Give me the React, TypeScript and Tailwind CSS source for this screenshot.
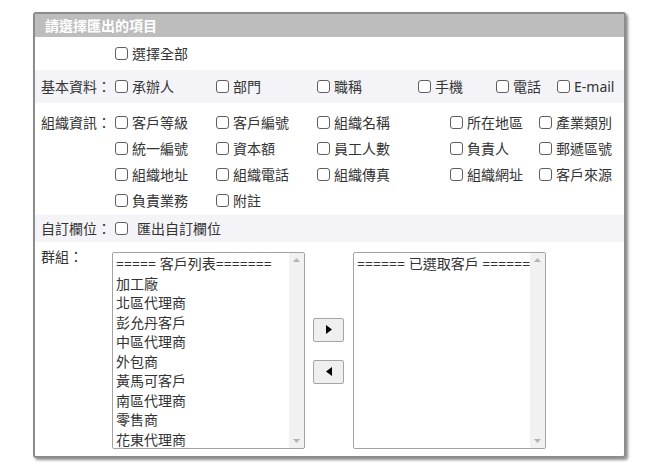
import React from "react";

const Box = () => (
  <span className="inline-block w-[13px] h-[13px] border border-[#5f5f5f] rounded-[3px] bg-white shrink-0" />
);

const Item = ({ label, w, gap = "gap-[4px]" }: { label: string; w?: string; gap?: string }) => (
  <div className={`flex items-center ${gap} ${w ?? ""} shrink-0`}>
    <Box />
    <span className="whitespace-nowrap">{label}</span>
  </div>
);

const ScrollSelect = ({ lines }: { lines: string[] }) => (
  <div className="flex w-[193px] h-[197px] border border-[#a3a3a3] rounded-[2px] bg-white overflow-hidden">
    <div className="flex-1 min-w-0 overflow-hidden pl-[3px] pt-[1px] leading-[19.5px] text-[14px] text-[#333]">
      {lines.map((l, i) => (
        <div key={i} className="whitespace-nowrap overflow-hidden">
          {l}
        </div>
      ))}
    </div>
    <div className="w-[15px] bg-[#f1f1f1] flex flex-col justify-between items-center py-[5px]">
      <svg width="7" height="4" viewBox="0 0 7 4">
        <path d="M0 4 L3.5 0 L7 4 Z" fill="#b4b4b4" />
      </svg>
      <svg width="7" height="4" viewBox="0 0 7 4">
        <path d="M0 0 L3.5 4 L7 0 Z" fill="#b4b4b4" />
      </svg>
    </div>
  </div>
);

export default function App() {
  const left = [
    "===== 客戶列表=======",
    "加工廠",
    "北區代理商",
    "彭允丹客戶",
    "中區代理商",
    "外包商",
    "黃馬可客戶",
    "南區代理商",
    "零售商",
    "花東代理商",
  ];
  return (
    <div className="w-[661px] h-[472px] bg-white font-['Noto_Sans','Noto_Sans_CJK_TC',sans-serif] text-[14px] text-[#333] pt-[12px] pl-[33px]">
      <div className="w-[593px] h-[446px] border-2 border-[#8c8c8c] rounded-[3px] shadow-[2px_2px_3px_rgba(0,0,0,0.45)] flex flex-col overflow-hidden">
        <div className="h-[23px] bg-[#bdbdbd] text-white font-bold text-[14px] leading-[23px] pl-[10px]">
          請選擇匯出的項目
        </div>
        {/* select all */}
        <div className="h-[33px] flex items-center">
          <div className="w-[80px] shrink-0" />
          <Item label="選擇全部" />
        </div>
        {/* basic */}
        <div className="h-[33px] flex items-center bg-[#f4f4f8]">
          <div className="w-[80px] shrink-0 pl-[6px] whitespace-nowrap">基本資料：</div>
          <Item label="承辦人" w="w-[101px]" />
          <Item label="部門" w="w-[101px]" />
          <Item label="職稱" w="w-[101px]" />
          <Item label="手機" w="w-[78px]" />
          <Item label="電話" w="w-[61px]" />
          <Item label="E-mail" />
        </div>
        {/* org */}
        <div className="h-[112px] flex bg-white pt-[6px]">
          <div className="w-[80px] shrink-0 pl-[6px] whitespace-nowrap h-[26px] flex items-center">組織資訊：</div>
          <div className="flex flex-col">
            {[
              ["客戶等級", "客戶編號", "組織名稱", "所在地區", "產業類別"],
              ["統一編號", "資本額", "員工人數", "負責人", "郵遞區號"],
              ["組織地址", "組織電話", "組織傳真", "組織網址", "客戶來源"],
              ["負責業務", "附註"],
            ].map((row, r) => (
              <div key={r} className="h-[26px] flex items-center">
                {row.map((t, i) => (
                  <Item
                    key={i}
                    label={t}
                    w={["w-[101px]", "w-[101px]", "w-[133px]", "w-[89px]", ""][i]}
                  />
                ))}
              </div>
            ))}
          </div>
        </div>
        {/* custom */}
        <div className="h-[27px] flex items-center bg-[#f4f4f8]">
          <div className="w-[80px] shrink-0 pl-[6px] whitespace-nowrap">自訂欄位：</div>
          <Item label="匯出自訂欄位" gap="gap-[9px]" />
        </div>
        {/* group */}
        <div className="flex-1 flex pt-[10px]">
          <div className="w-[77px] shrink-0 pl-[6px] whitespace-nowrap leading-[10px] pt-[0px]">群組：</div>
          <div className="flex items-center gap-[8px] h-[197px]">
            <ScrollSelect lines={left} />
            <div className="flex flex-col gap-[18px]">
              <button className="w-[31px] h-[24px] border border-[#a5a5a5] rounded-[2px] bg-[#efefef] flex items-center justify-center">
                <svg width="6" height="9" viewBox="0 0 6 9">
                  <path d="M0 0 L6 4.5 L0 9 Z" fill="#000" />
                </svg>
              </button>
              <button className="w-[31px] h-[24px] border border-[#a5a5a5] rounded-[2px] bg-[#efefef] flex items-center justify-center">
                <svg width="6" height="9" viewBox="0 0 6 9">
                  <path d="M6 0 L0 4.5 L6 9 Z" fill="#000" />
                </svg>
              </button>
            </div>
            <div className="ml-[1px]">
              <ScrollSelect lines={["====== 已選取客戶 ======"]} />
            </div>
          </div>
        </div>
      </div>
    </div>
  );
}
